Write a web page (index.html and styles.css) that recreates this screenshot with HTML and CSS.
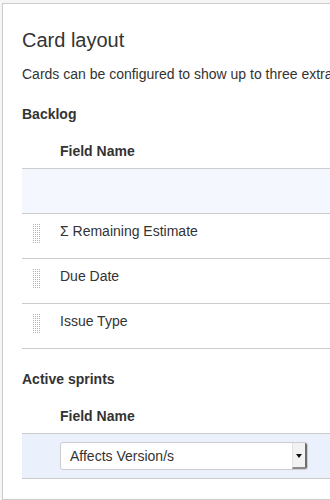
FILE: index.html
```html
<!DOCTYPE html>
<html lang="en">
<head>
    <meta charset="UTF-8">
    <meta name="viewport" content="width=device-width, initial-scale=1.0">
    <title>Card layout</title>
    <link rel="stylesheet" href="styles.css">
</head>
<body>
    <div class="panel">
        <h2 class="title">Card layout</h2>
        <p class="desc">Cards can be configured to show up to three extra fields.</p>

        <h3 class="section">Backlog</h3>
        <div class="fields">
            <div class="fields-head">
                <div class="grip-cell"></div>
                <div class="name-head">Field Name</div>
            </div>
            <div class="field-row add-row"></div>
            <div class="field-row">
                <div class="grip-cell"><span class="grip"></span></div>
                <div class="name-cell">&Sigma; Remaining Estimate</div>
            </div>
            <div class="field-row">
                <div class="grip-cell"><span class="grip"></span></div>
                <div class="name-cell">Due Date</div>
            </div>
            <div class="field-row">
                <div class="grip-cell"><span class="grip"></span></div>
                <div class="name-cell">Issue Type</div>
            </div>
        </div>

        <h3 class="section">Active sprints</h3>
        <div class="fields">
            <div class="fields-head">
                <div class="grip-cell"></div>
                <div class="name-head">Field Name</div>
            </div>
            <div class="field-row add-row active">
                <div class="grip-cell"></div>
                <div class="select-cell">
                    <div class="select">
                        <span class="select-value">Affects Version/s</span>
                        <span class="select-arrow"></span>
                    </div>
                </div>
            </div>
        </div>
    </div>
</body>
</html>
```

FILE: styles.css
```css
body {
    margin: 0;
    background-color: #f5f5f5;
    color: #333;
    font-family: "Liberation Sans", Arial, sans-serif;
    font-size: 14px;
    line-height: 20px;
    overflow: hidden;
}
.panel {
    margin: 3px 0 0 2px;
    width: 700px;
    padding: 24px 0 20px 19px;
    background-color: #fff;
    border-top: 1px solid #ccc;
    border-left: 1px solid #ccc;
    border-bottom: 1px solid #ccc;
}
.title {
    margin: 0;
    font-size: 20px;
    font-weight: normal;
    line-height: 24px;
}
.desc {
    margin: 12px 0 0;
    white-space: nowrap;
}
.section {
    margin: 20px 0 0;
    font-size: 14px;
    font-weight: bold;
    line-height: 20px;
}
.fields {
    margin-top: 10px;
}
.fields-head {
    display: flex;
    padding: 7px 0;
    border-bottom: 1px solid #ccc;
    font-weight: bold;
}
.field-row {
    display: flex;
    height: 44px;
    border-bottom: 1px solid #ccc;
}
.add-row {
    background-color: #f4f7fd;
}
.add-row.active {
    background-color: #eaf1fc;
}
.grip-cell {
    width: 38px;
    flex-shrink: 0;
    padding: 9px 0 0 11px;
    box-sizing: border-box;
}
.grip {
    display: block;
    width: 8px;
    height: 20px;
    background-image:
        linear-gradient(#fff 1px, transparent 1px),
        linear-gradient(90deg, #b4b4b4 1px, transparent 1px);
    background-size: 2px 2px;
}
.name-cell {
    padding-top: 7px;
}
.select-cell {
    padding-top: 8px;
}
.select {
    display: flex;
    width: 248px;
    height: 28px;
    box-sizing: border-box;
    border: 1px solid #ccc;
    border-radius: 3px;
    background-color: #fff;
}
.select-value {
    padding-left: 9px;
    line-height: 26px;
}
.select-arrow {
    position: relative;
    margin-left: auto;
    width: 12px;
    background-color: #f2f2f2;
    border-left: 1px solid #e2e2e2;
    border-right: 2px solid #6e6e6e;
    border-bottom: 2px solid #8a8a8a;
    border-radius: 0 2px 2px 0;
}
.select-arrow::after {
    content: "";
    position: absolute;
    left: 3px;
    top: 11px;
    border-left: 3px solid transparent;
    border-right: 3px solid transparent;
    border-top: 4px solid #111;
}
```
